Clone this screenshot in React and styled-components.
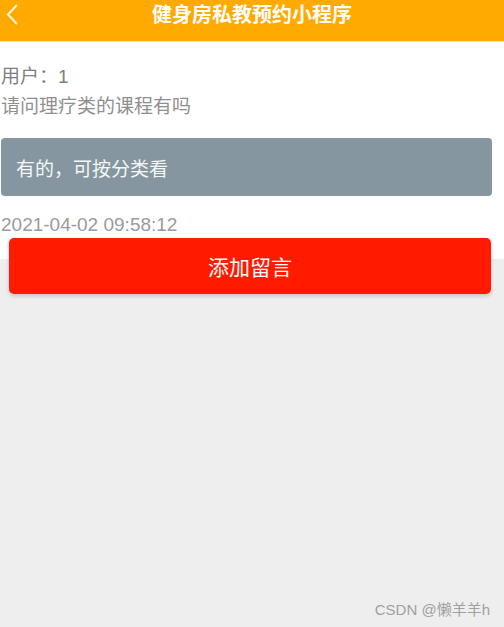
import React from "react";
import styled, { createGlobalStyle } from "styled-components";

const Global = createGlobalStyle`
  html, body { margin: 0; padding: 0; background: #eeeeee; }
  body { font-family: "Liberation Sans", "Noto Sans CJK SC", sans-serif; }
  #root { min-height: 627px; }
`;

const Page = styled.div`
  width: 504px;
  min-height: 627px;
  display: flex;
  flex-direction: column;
  background: #eeeeee;
  position: relative;
`;

const Header = styled.header`
  height: 42px;
  background: #ffaa00;
  display: flex;
  align-items: center;
  justify-content: center;
  position: relative;
  border-bottom: 1px solid #f6e6c0;
  box-sizing: border-box;
`;

const Back = styled.span`
  position: absolute;
  left: 4px;
  top: 3px;
  width: 16px;
  height: 22px;
  display: flex;
`;

const Title = styled.h1`
  margin: 0;
  color: #fff;
  font-size: 20px;
  font-weight: bold;
  margin-top: -14px;
`;

const Content = styled.section`
  background: #fff;
  display: flex;
  flex-direction: column;
  padding: 20px 12px 0 1px;
  height: 217px;
  box-sizing: border-box;
`;

const Line = styled.div`
  font-size: 19px;
  line-height: 30px;
  color: ${(p) => p.color || "#8a8a8a"};
  margin-top: ${(p) => p.mt || 0}px;
`;

const Reply = styled.div`
  margin-top: 16px;
  height: 58px;
  flex-shrink: 0;
  background: #8596a0;
  border-radius: 4px;
  display: flex;
  align-items: center;
  padding-left: 15px;
  color: #f4f6f7;
  font-size: 19px;
`;

const AddButton = styled.button`
  margin: -21px 13px 0 9px;
  height: 56px;
  border: none;
  border-radius: 5px;
  background: #ff1a00;
  color: #fff;
  font-family: inherit;
  font-size: 21px;
  box-shadow: 0 2px 4px rgba(0, 0, 0, 0.18);
  position: relative;
`;

const Watermark = styled.div`
  position: absolute;
  right: 14px;
  bottom: 8px;
  font-size: 15px;
  color: #a0a0a0;
`;

export default function App() {
  return (
    <>
      <Global />
      <Page>
        <Header>
          <Back>
            <svg width="16" height="22" viewBox="0 0 16 22">
              <path d="M13 2 L4 11.5 L13 21" fill="none" stroke="#fff6dd" strokeWidth="2" />
            </svg>
          </Back>
          <Title>健身房私教预约小程序</Title>
        </Header>
        <Content>
          <Line color="#7f7f7f">用户：1</Line>
          <Line color="#8f8f8f">请问理疗类的课程有吗</Line>
          <Reply>有的，可按分类看</Reply>
          <Line mt="14" color="#9a9a9a">2021-04-02 09:58:12</Line>
        </Content>
        <AddButton>添加留言</AddButton>
        <Watermark>CSDN @懒羊羊h</Watermark>
      </Page>
    </>
  );
}
